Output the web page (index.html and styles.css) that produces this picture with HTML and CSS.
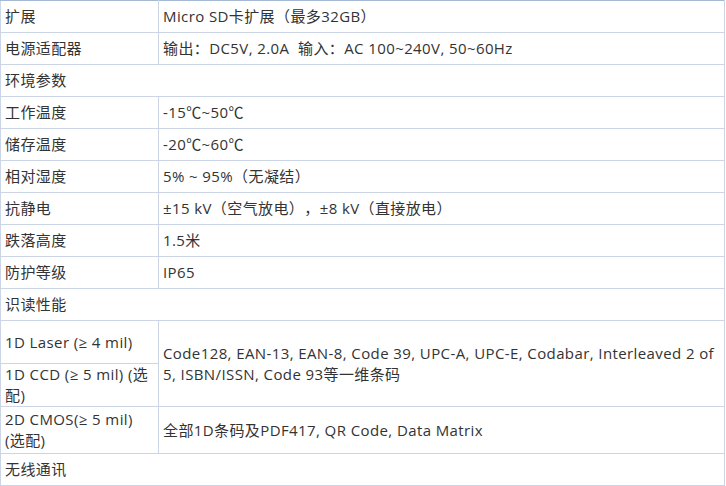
FILE: index.html
```html
<!DOCTYPE html>
<html lang="zh">
<head>
<meta charset="utf-8">
<link rel="stylesheet" href="styles.css">
</head>
<body>
<table class="spec">
  <colgroup><col class="c1"><col class="c2"></colgroup>
  <tr class="first"><td>扩展</td><td>Micro SD卡扩展（最多32GB）</td></tr>
  <tr><td>电源适配器</td><td>输出：DC5V, 2.0A&nbsp; 输入：AC 100~240V, 50~60Hz</td></tr>
  <tr><td colspan="2">环境参数</td></tr>
  <tr><td>工作温度</td><td>-15℃~50℃</td></tr>
  <tr><td>储存温度</td><td>-20℃~60℃</td></tr>
  <tr><td>相对湿度</td><td>5% ~ 95%（无凝结）</td></tr>
  <tr><td>抗静电</td><td>±15 kV（空气放电），±8 kV（直接放电）</td></tr>
  <tr><td>跌落高度</td><td>1.5米</td></tr>
  <tr><td>防护等级</td><td>IP65</td></tr>
  <tr><td colspan="2">识读性能</td></tr>
  <tr class="r43"><td>1D Laser (≥ 4 mil)</td><td rowspan="2">Code128, EAN-13, EAN-8, Code 39, UPC-A, UPC-E, Codabar, Interleaved 2 of 5, ISBN/ISSN, Code 93等一维条码</td></tr>
  <tr class="r43"><td>1D CCD (≥ 5 mil) (选配)</td></tr>
  <tr class="r47"><td>2D CMOS(≥ 5 mil) (选配)</td><td>全部1D条码及PDF417, QR Code, Data Matrix</td></tr>
  <tr><td colspan="2">无线通讯</td></tr>
</table>
</body>
</html>
```
FILE: styles.css
```css
html, body {
  margin: 0;
  padding: 0;
  background: #ffffff;
}
.spec {
  border-collapse: collapse;
  width: 725px;
  table-layout: fixed;
  font-family: "Open Sans", "Noto Sans CJK SC", sans-serif;
  font-size: 15px;
  letter-spacing: 0.4px;
  text-spacing-trim: space-all;
  color: #333333;
}
.c1 { width: 158px; }
.spec tr { height: 32px; }
.spec td {
  border: 1px solid #cbd5e6;
  padding: 0 4px;
  line-height: 21px;
  vertical-align: middle;
}
.spec tr.r43 { height: 43px; }
.spec tr.r47 { height: 47px; }
.spec tr.first td { border-top-color: #a5b8d4; }
```
